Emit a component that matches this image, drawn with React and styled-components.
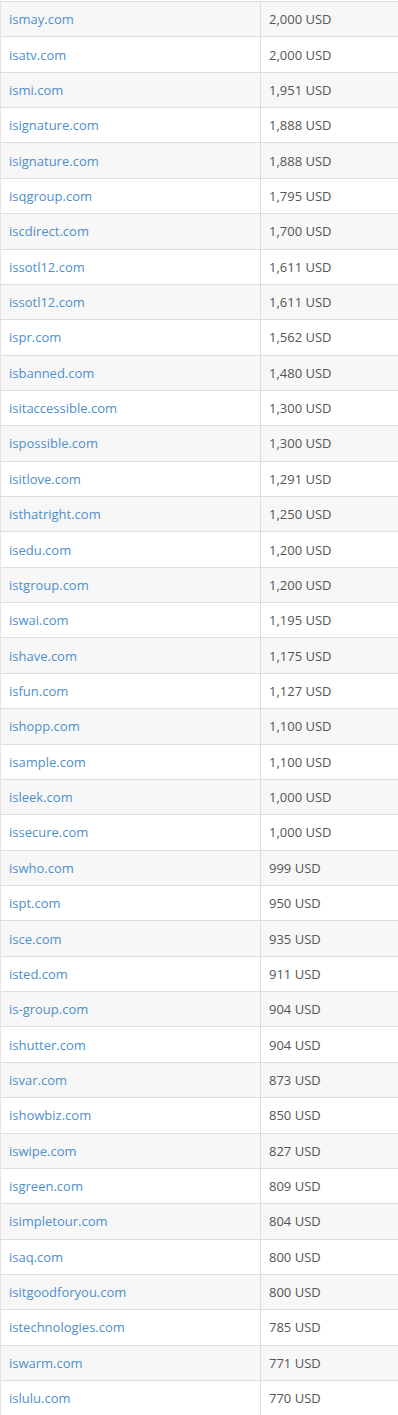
import React from 'react';
import styled, { createGlobalStyle } from 'styled-components';

const GlobalStyle = createGlobalStyle`
  body {
    margin: 0;
    background: #fff;
    font-family: 'Open Sans', 'Liberation Sans', sans-serif;
  }
`;

const Table = styled.table`
  width: 398px;
  margin-top: 1px;
  border-collapse: collapse;
  table-layout: fixed;
  font-size: 13px;
  color: #555;
`;

const Row = styled.tr`
  height: 35.37px;
  background: ${p => (p.$striped ? '#f7f7f7' : '#fff')};
`;

const Cell = styled.td`
  padding: 0 8px;
  border-top: 1px solid #ddd;
  border-left: ${p => (p.$first ? '1px solid #e4e4e4' : '1px solid #ddd')};
  vertical-align: middle;
  line-height: 18px;
  white-space: nowrap;
`;

const DomainLink = styled.a`
  color: #4f8fcb;
  text-decoration: none;
`;

const domains = [
  ['ismay.com', '2,000'],
  ['isatv.com', '2,000'],
  ['ismi.com', '1,951'],
  ['isignature.com', '1,888'],
  ['isignature.com', '1,888'],
  ['isqgroup.com', '1,795'],
  ['iscdirect.com', '1,700'],
  ['issotl12.com', '1,611'],
  ['issotl12.com', '1,611'],
  ['ispr.com', '1,562'],
  ['isbanned.com', '1,480'],
  ['isitaccessible.com', '1,300'],
  ['ispossible.com', '1,300'],
  ['isitlove.com', '1,291'],
  ['isthatright.com', '1,250'],
  ['isedu.com', '1,200'],
  ['istgroup.com', '1,200'],
  ['iswai.com', '1,195'],
  ['ishave.com', '1,175'],
  ['isfun.com', '1,127'],
  ['ishopp.com', '1,100'],
  ['isample.com', '1,100'],
  ['isleek.com', '1,000'],
  ['issecure.com', '1,000'],
  ['iswho.com', '999'],
  ['ispt.com', '950'],
  ['isce.com', '935'],
  ['isted.com', '911'],
  ['is-group.com', '904'],
  ['ishutter.com', '904'],
  ['isvar.com', '873'],
  ['ishowbiz.com', '850'],
  ['iswipe.com', '827'],
  ['isgreen.com', '809'],
  ['isimpletour.com', '804'],
  ['isaq.com', '800'],
  ['isitgoodforyou.com', '800'],
  ['istechnologies.com', '785'],
  ['iswarm.com', '771'],
  ['islulu.com', '770'],
];

const App = () => (
  <>
    <GlobalStyle />
    <Table>
      <colgroup>
        <col style={{ width: 260 }} />
        <col />
      </colgroup>
      <tbody>
        {domains.map(([name, price], i) => (
          <Row key={`${name}${i}`} $striped={i % 2 === 0}>
            <Cell $first>
              <DomainLink href='#'>{name}</DomainLink>
            </Cell>
            <Cell>{price} USD</Cell>
          </Row>
        ))}
      </tbody>
    </Table>
  </>
);

export default App;
